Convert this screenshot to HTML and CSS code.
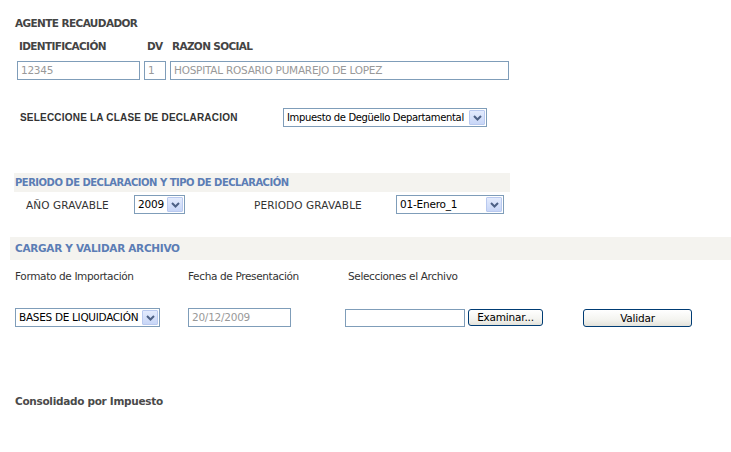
FILE: index.html
```html
<!DOCTYPE html>
<html lang="es">
<head>
<meta charset="utf-8">
<title>Agente Recaudador</title>
<link rel="stylesheet" href="styles.css">
</head>
<body>
<div class="page">
  <div class="title">AGENTE RECAUDADOR</div>
  <div class="agent-grid">
    <div class="lbl">IDENTIFICACIÓN</div>
    <div class="lbl">DV</div>
    <div class="lbl">RAZON SOCIAL</div>
    <div class="inp">12345</div>
    <div class="inp">1</div>
    <div class="inp">HOSPITAL ROSARIO PUMAREJO DE LOPEZ</div>
  </div>

  <div class="clase-row">
    <div class="clase-lbl">SELECCIONE LA CLASE DE DECLARACION</div>
    <div class="sel sel-clase"><span class="sel-text">Impuesto de Degüello Departamental</span><span class="sel-btn"><svg width="9" height="6" viewBox="0 0 9 6"><path d="M1 1 L4.5 4.5 L8 1" fill="none" stroke="#4d6185" stroke-width="2"/></svg></span></div>
  </div>

  <div class="band band-1">PERIODO DE DECLARACION Y TIPO DE DECLARACIÓN</div>
  <div class="periodo-row">
    <div class="plbl plbl-ano">AÑO GRAVABLE</div>
    <div class="sel sel-ano"><span class="sel-text">2009</span><span class="sel-btn"><svg width="9" height="6" viewBox="0 0 9 6"><path d="M1 1 L4.5 4.5 L8 1" fill="none" stroke="#4d6185" stroke-width="2"/></svg></span></div>
    <div class="plbl plbl-per">PERIODO GRAVABLE</div>
    <div class="sel sel-per"><span class="sel-text">01-Enero_1</span><span class="sel-btn"><svg width="9" height="6" viewBox="0 0 9 6"><path d="M1 1 L4.5 4.5 L8 1" fill="none" stroke="#4d6185" stroke-width="2"/></svg></span></div>
  </div>

  <div class="band band-2">CARGAR Y VALIDAR ARCHIVO</div>
  <div class="carga-labels">
    <div class="cl cl-1">Formato de Importación</div>
    <div class="cl cl-2">Fecha de Presentación</div>
    <div class="cl cl-3">Selecciones el Archivo</div>
  </div>
  <div class="carga-row">
    <div class="sel sel-bases"><span class="sel-text">BASES DE LIQUIDACIÓN</span><span class="sel-btn"><svg width="9" height="6" viewBox="0 0 9 6"><path d="M1 1 L4.5 4.5 L8 1" fill="none" stroke="#4d6185" stroke-width="2"/></svg></span></div>
    <div class="inp inp-fecha">20/12/2009</div>
    <div class="inp inp-file"></div>
    <div class="btn btn-exam">Examinar...</div>
    <div class="btn btn-val">Validar</div>
  </div>

  <div class="consol">Consolidado por Impuesto</div>
</div>
</body>
</html>
```

FILE: styles.css
```css
* { box-sizing: border-box; }
html, body { margin: 0; padding: 0; background: #fff; }
body {
  font-family: "DejaVu Sans", Verdana, sans-serif;
  font-size: 11px;
  color: #333;
}
.page { padding-left: 10px; width: 731px; }

.title {
  margin: 16px 0 0 5px;
  line-height: 14px;
  font-weight: bold;
  font-size: 10.5px;
  color: #444;
  letter-spacing: -0.6px;
}

.agent-grid {
  display: grid;
  grid-template-columns: 123px 22px 339px;
  column-gap: 4px;
  margin: 9px 0 0 7px;
}
.lbl {
  line-height: 14px;
  font-weight: bold;
  font-size: 10.5px;
  color: #444;
  letter-spacing: -0.65px;
  padding-left: 2px;
  margin-bottom: 8px;
}
.agent-grid .lbl:nth-child(2) { padding-left: 3px; }

.inp {
  height: 19px;
  border: 1px solid #7f9db9;
  background: #fff;
  color: #999;
  font-size: 10.5px;
  line-height: 17px;
  padding-left: 3px;
  white-space: nowrap;
  overflow: hidden;
  letter-spacing: -0.25px;
}

.clase-row {
  display: flex;
  align-items: center;
  margin-top: 28px;
  height: 19px;
}
.clase-lbl {
  margin-left: 10px;
  width: 263px;
  font-family: "Liberation Sans", Arial, sans-serif;
  font-weight: bold;
  font-size: 10px;
  color: #333;
  letter-spacing: 0.2px;
}

.sel {
  display: flex;
  align-items: stretch;
  height: 19px;
  border: 1px solid #7f9db9;
  background: #fff;
  color: #000;
  padding: 1px;
}
.sel-text {
  flex: 1;
  padding-left: 2px;
  line-height: 15px;
  font-size: 10.5px;
  white-space: nowrap;
  overflow: hidden;
  letter-spacing: -0.2px;
}
.sel-btn {
  width: 16px;
  flex: none;
  border: 1px solid #b9c9ef;
  border-radius: 1px;
  background: linear-gradient(#e3ebfd, #c8d6f7);
  display: flex;
  align-items: center;
  justify-content: center;
}
.sel-clase { width: 204px; }
.sel-clase .sel-text { font-size: 10px; letter-spacing: -0.35px; }

.band {
  background: #f4f3ef;
  color: #5b7db5;
  font-weight: bold;
  font-size: 10.5px;
  letter-spacing: -0.3px;
  padding-left: 1px;
}
.band-1 {
  margin: 46px 0 0 4px;
  width: 496px;
  height: 19px;
  line-height: 19px;
  font-size: 10px;
  letter-spacing: -0.5px;
}
.periodo-row {
  display: flex;
  align-items: center;
  margin-top: 3px;
  height: 19px;
}
.plbl {
  font-size: 10.5px;
  color: #333;
  letter-spacing: 0.1px;
}
.plbl-ano { margin-left: 16px; width: 108px; }
.sel-ano { width: 51px; }
.plbl-per { margin-left: 69px; width: 142px; }
.sel-per { width: 108px; }

.band-2 {
  margin-top: 23px;
  width: 721px;
  height: 23px;
  line-height: 23px;
  padding-left: 5px;
}

.carga-labels {
  display: flex;
  margin-top: 9px;
  line-height: 14px;
  font-size: 10.5px;
  color: #333;
  letter-spacing: -0.35px;
}
.cl-1 { margin-left: 5px; width: 173px; }
.cl-2 { width: 160px; }

.carga-row {
  display: flex;
  align-items: center;
  margin-top: 25px;
  height: 19px;
  padding-left: 5px;
}
.sel-bases { width: 145px; }
.sel-bases .sel-text { letter-spacing: -0.3px; }
.inp-fecha { margin-left: 28px; width: 103px; }
.inp-file { margin-left: 54px; width: 120px; height: 18px; }
.btn {
  height: 17px;
  border: 1px solid #003c74;
  border-radius: 3px;
  background: linear-gradient(#ffffff, #f4f4f0 60%, #e3e2da);
  color: #000;
  text-align: center;
  font-size: 10.5px;
  line-height: 15px;
  letter-spacing: -0.2px;
}
.btn-exam { margin-left: 3px; width: 75px; }
.btn-val { margin-left: 40px; width: 109px; height: 18px; line-height: 16px; }

.consol {
  margin: 67px 0 0 5px;
  line-height: 14px;
  font-weight: bold;
  font-size: 10.5px;
  color: #4a4a4a;
  letter-spacing: -0.3px;
}
```
